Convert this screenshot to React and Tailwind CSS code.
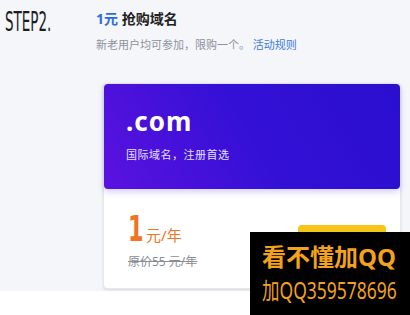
import React from 'react';

const App = () => {
  return (
    <div className="relative w-[410px] h-[315px] overflow-hidden bg-white" style={{ fontFamily: '"Noto Sans", "Noto Sans CJK SC", sans-serif' }}>
      <div className="flex bg-[#f5f6fa] h-[291px]">
        {/* step label */}
        <div className="w-[96px] pl-[5px] pt-[7px]">
          <p className="text-[27px] leading-[30px] text-[#1c1c1c] scale-x-[0.5] origin-left font-['DejaVu_Sans',sans-serif] whitespace-nowrap">STEP2.</p>
        </div>

        <div className="flex-1 pt-[9px]">
          <p className="text-[14px] leading-[20px] font-bold text-[#222]">
            <span className="text-[#2c6ce0]">1元</span> 抢购域名
          </p>
          <p className="mt-[8px] text-[11px] leading-[16px] text-[#8d929c]">
            新老用户均可参加，限购一个。 <span className="text-[#3b7be2]">活动规则</span>
          </p>

          {/* card */}
          <div className="mt-[30px] ml-[7px] w-[298px] h-[206px] bg-white border border-[#e6e8ee] rounded-[4px] shadow-sm">
            <div className="h-[105px] rounded-[4px] bg-[linear-gradient(60deg,#5b12df_0%,#3410d6_50%,#2a0fcf_100%)] pl-[22px] pt-[23px] shadow-[0_3px_6px_rgba(90,60,230,0.25)]">
              <p className="text-[26px] leading-[28px] font-bold text-white tracking-[1px]">.com</p>
              <p className="mt-[12px] text-[11px] leading-[16px] text-[#e6e0ff] tracking-[0.5px]">国际域名，注册首选</p>
            </div>
            <div className="flex items-start justify-between pl-[24px] pr-[14px] pt-[22px]">
              <div>
                <p className="text-[#f07424] leading-none">
                  <span className="inline-block text-[36px] font-bold font-['DejaVu_Sans',sans-serif] scale-x-[0.62] origin-left -mr-[7px]">1</span>
                  <span className="text-[15px]">元/年</span>
                </p>
                <p className="mt-[7px] text-[12px] leading-[16px] text-[#8a8e96] line-through">原价55 元/年</p>
              </div>
              <div className="mt-[14px] w-[88px] h-[30px] rounded-[4px] bg-[#f5c518]" />
            </div>
          </div>
        </div>
      </div>

      {/* qq overlay */}
      <div className="absolute left-[250px] top-[232px] w-[160px] h-[83px] bg-black pl-[12px] pt-[9px]">
        <p className="text-[24px] leading-[32px] font-bold text-[#f2a21c] whitespace-nowrap">看不懂加QQ</p>
        <p className="mt-[4px] text-[23px] leading-[26px] text-[#f2a21c] scale-x-[0.76] origin-left whitespace-nowrap">加QQ359578696</p>
      </div>
    </div>
  );
};

export default App;
